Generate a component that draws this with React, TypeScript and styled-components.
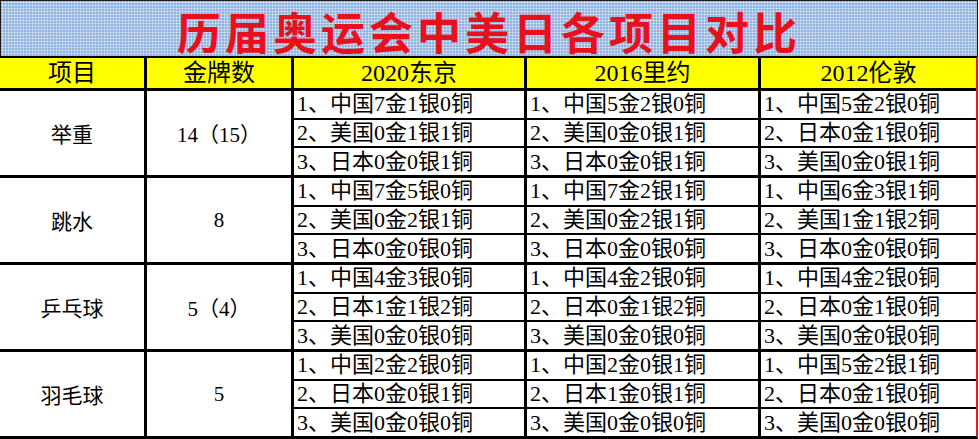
import React from "react";
import styled, { createGlobalStyle } from "styled-components";

const Global = createGlobalStyle`
  html, body { margin: 0; padding: 0; background: #ffffff; }
  body { font-family: "Liberation Serif", "Noto Sans CJK SC", serif; }
`;

const Sheet = styled.div`
  width: 978px;
  display: flex;
  flex-direction: column;
`;

const TitleBar = styled.div`
  height: 55px;
  box-sizing: content-box;
  border-top: 1px solid #1a1a1a;
  border-left: 1px solid #1a1a1a;
  border-right: 1px solid #1a1a1a;
  background-color: #93b5e0;
  background-image: radial-gradient(circle, rgba(255, 255, 255, 0.75) 0.7px, transparent 1.2px);
  background-size: 3px 3px;
  display: flex;
  align-items: center;
  justify-content: center;
`;

const Title = styled.h1`
  margin: 0;
  padding-top: 4px;
  font-family: "Noto Sans CJK SC", sans-serif;
  font-weight: 700;
  font-size: 44px;
  letter-spacing: 4px;
  line-height: 48px;
  color: #e8101c;
`;

const Table = styled.div`
  display: grid;
  grid-template-columns: 144px 144px 230px 231px 215px;
  column-gap: 3px;
  row-gap: 3px;
  background: #000000;
  border-top: 2px solid #000000;
  border-bottom: 3px solid #000000;
  border-right: 2px solid #e01b1b;
  width: 976px;
`;

const HeadCell = styled.div`
  height: 30px;
  background: #ffff00;
  display: flex;
  align-items: center;
  justify-content: center;
  font-size: 24px;
  color: #000;
  line-height: 1;
`;

const SportCell = styled.div`
  height: 84px;
  background: #ffffff;
  display: flex;
  align-items: center;
  justify-content: center;
  font-size: 21px;
  color: #000;
`;

const SubList = styled.div`
  height: 84px;
  display: grid;
  grid-template-rows: repeat(3, 1fr);
  row-gap: 2px;
  background: #000000;
`;

const SubRow = styled.div`
  background: #ffffff;
  display: flex;
  align-items: center;
  padding-left: 3px;
  font-size: 22px;
  color: #000;
  white-space: nowrap;
  line-height: 1;
`;

type Group = { sport: string; count: string; cols: string[][] };

const headers = ["项目", "金牌数", "2020东京", "2016里约", "2012伦敦"];

const groups: Group[] = [
  {
    sport: "举重",
    count: "14（15）",
    cols: [
      ["1、中国7金1银0铜", "2、美国0金1银1铜", "3、日本0金0银1铜"],
      ["1、中国5金2银0铜", "2、美国0金0银1铜", "3、日本0金0银1铜"],
      ["1、中国5金2银0铜", "2、日本0金1银0铜", "3、美国0金0银1铜"],
    ],
  },
  {
    sport: "跳水",
    count: "8",
    cols: [
      ["1、中国7金5银0铜", "2、美国0金2银1铜", "3、日本0金0银0铜"],
      ["1、中国7金2银1铜", "2、美国0金2银1铜", "3、日本0金0银0铜"],
      ["1、中国6金3银1铜", "2、美国1金1银2铜", "3、日本0金0银0铜"],
    ],
  },
  {
    sport: "乒乓球",
    count: "5（4）",
    cols: [
      ["1、中国4金3银0铜", "2、日本1金1银2铜", "3、美国0金0银0铜"],
      ["1、中国4金2银0铜", "2、日本0金1银2铜", "3、美国0金0银0铜"],
      ["1、中国4金2银0铜", "2、日本0金1银0铜", "3、美国0金0银0铜"],
    ],
  },
  {
    sport: "羽毛球",
    count: "5",
    cols: [
      ["1、中国2金2银0铜", "2、日本0金0银1铜", "3、美国0金0银0铜"],
      ["1、中国2金0银1铜", "2、日本1金0银1铜", "3、美国0金0银0铜"],
      ["1、中国5金2银1铜", "2、日本0金1银0铜", "3、美国0金0银0铜"],
    ],
  },
];

export default function App() {
  return (
    <>
      <Global />
      <Sheet>
        <TitleBar>
          <Title>历届奥运会中美日各项目对比</Title>
        </TitleBar>
        <Table>
          {headers.map((h) => (
            <HeadCell key={h}>{h}</HeadCell>
          ))}
          {groups.map((g) => (
            <React.Fragment key={g.sport}>
              <SportCell>{g.sport}</SportCell>
              <SportCell>{g.count}</SportCell>
              {g.cols.map((col, ci) => (
                <SubList key={ci}>
                  {col.map((t) => (
                    <SubRow key={t}>{t}</SubRow>
                  ))}
                </SubList>
              ))}
            </React.Fragment>
          ))}
        </Table>
      </Sheet>
    </>
  );
}
